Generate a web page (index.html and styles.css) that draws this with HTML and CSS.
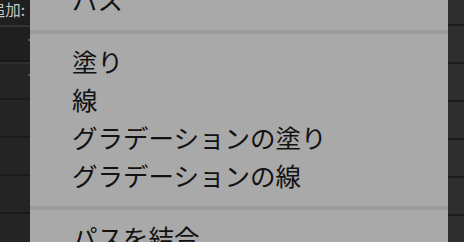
FILE: index.html
```html
<!DOCTYPE html>
<html lang="ja">
<head>
<meta charset="utf-8">
<link rel="stylesheet" href="styles.css">
</head>
<body>
<div class="screen">
  <div class="side side-left">
    <div class="side-head"><span class="label">追加:</span></div>
    <div class="row row-a"><span class="tick"></span></div>
    <div class="row"><span class="tick"></span></div>
    <div class="row"></div>
    <div class="row"></div>
    <div class="row"></div>
    <div class="row"></div>
  </div>
  <div class="menu">
    <ul class="list">
      <li class="item">パス</li>
      <li class="sep"></li>
      <li class="item">塗り</li>
      <li class="item">線</li>
      <li class="item">グラデーションの塗り</li>
      <li class="item">グラデーションの線</li>
      <li class="sep"></li>
      <li class="item">パスを結合</li>
    </ul>
  </div>
  <div class="side side-right">
    <div class="rrow first"></div>
    <div class="rrow"></div>
    <div class="rrow"></div>
    <div class="rrow"></div>
    <div class="rrow"></div>
    <div class="rrow"></div>
    <div class="rrow"></div>
  </div>
</div>
</body>
</html>
```
FILE: styles.css
```css
html, body {
  margin: 0;
  padding: 0;
  width: 464px;
  height: 242px;
  overflow: hidden;
  background: #232323;
}
.screen {
  display: flex;
  width: 464px;
  height: 242px;
  overflow: hidden;
}
.side {
  display: flex;
  flex-direction: column;
  overflow: hidden;
}
.side-left {
  width: 30px;
  flex: 0 0 30px;
  background: #242424;
}
.side-head {
  height: 25px;
  flex: 0 0 25px;
  display: flex;
  justify-content: flex-end;
  align-items: flex-start;
  padding-right: 5px;
  border-bottom: 2px solid #333;
  background: #1f1f1f;
  overflow: hidden;
}
.label {
  font-family: "Noto Sans CJK JP", sans-serif;
  font-size: 15.5px;
  line-height: 18px;
  color: #c4c4c4;
  white-space: nowrap;
}
.row {
  height: 36px;
  flex: 0 0 36px;
  border-bottom: 2px solid #1a1a1a;
  position: relative;
}
.row-a {
  height: 33px;
  flex: 0 0 33px;
  background: #1f1f1f;
  border-bottom: 2px solid #181818;
  box-shadow: 0 2px 0 #2f2f2f;
}
.tick {
  position: absolute;
  right: 0;
  top: 12px;
  width: 2px;
  height: 2px;
  background: #555;
}
.menu {
  flex: 0 0 418px;
  width: 418px;
  background: #a9a9a9;
  overflow: hidden;
}
.list {
  list-style: none;
  margin: -20px 0 0 0;
  padding: 0;
}
.item {
  height: 38px;
  line-height: 38px;
  padding-left: 42px;
  font-family: "Noto Sans CJK JP", sans-serif;
  font-size: 25.5px;
  color: #121212;
  white-space: nowrap;
}
.sep {
  height: 4px;
  margin: 12px 0 8px;
  background: #9b9b9b;
}
.side-right {
  flex: 1 1 auto;
  background: #2e2e2e;
}
.rrow {
  height: 36px;
  flex: 0 0 36px;
  border-bottom: 2px solid #1b1b1b;
}
.rrow.first {
  height: 24px;
  flex: 0 0 24px;
}
```
